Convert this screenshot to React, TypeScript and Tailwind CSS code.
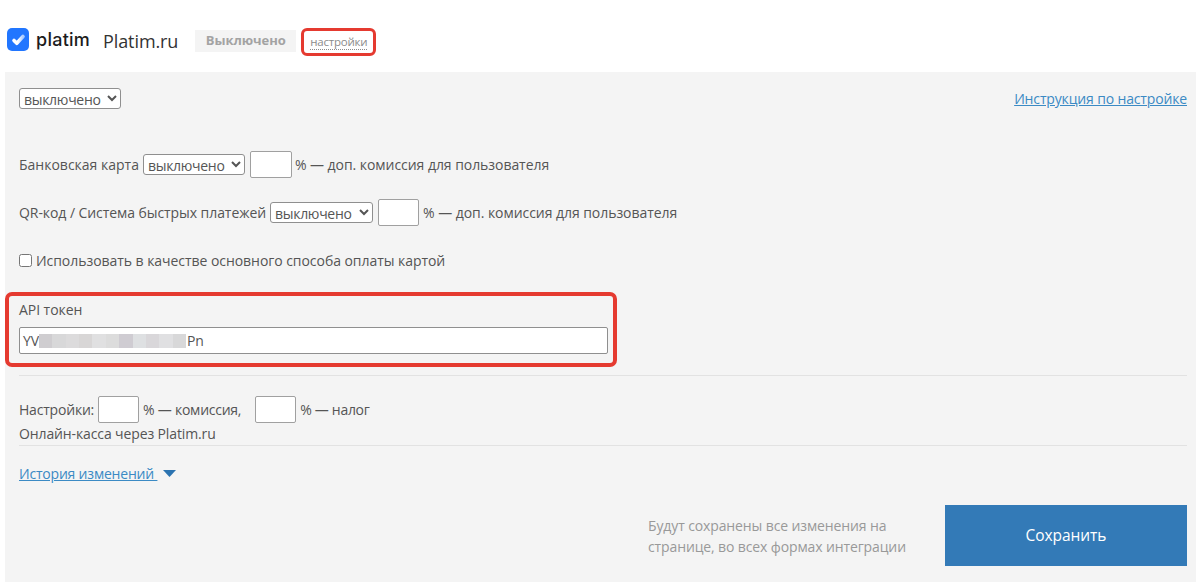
const blur = ["#cfcdd0", "#d8d8d9", "#dcdbdc", "#d8d6d6", "#e0e0e1", "#dcdcdc", "#cfccd2", "#dee0e2", "#d9d7da", "#e0e0e2", "#d8d8d9"];

export default function App() {
  const sel = "h-[21px] w-[102px] appearance-auto rounded-[3px] border border-[#8f8f8f] bg-white pl-0 text-[14px] leading-none tracking-[-0.3px] text-[#555]";
  const num = "h-[27px] rounded-[2px] border border-[#a0a0a0] bg-white";
  return (
    <div className="flex h-[582px] w-[1196px] flex-col overflow-hidden bg-white font-['Open_Sans','Liberation_Sans',sans-serif] text-[14px] tracking-[-0.05px] text-[#555]">
      <header className="flex h-[72px] shrink-0 items-center pl-[7px] pt-[7px]">
        <svg width="22" height="23" viewBox="0 0 22 23" className="shrink-0">
          <defs>
            <linearGradient id="chk" x1="0" y1="0" x2="1" y2="0">
              <stop offset="0.45" stopColor="#fff" />
              <stop offset="1" stopColor="#a9cbff" />
            </linearGradient>
          </defs>
          <rect width="22" height="23" rx="5" fill="#2176ff" />
          <path d="M7 12.5l2.8 2.8L16 8.5" fill="none" stroke="url(#chk)" strokeWidth="3.6" strokeLinecap="round" strokeLinejoin="round" />
        </svg>
        <span className="-mt-[1px] ml-[7px] font-['Inter',sans-serif] text-[18px] font-medium tracking-[0.25px] text-[#1c1c1c]">platim</span>
        <span className="ml-[13px] mt-[2px] text-[18px] leading-none tracking-[-0.1px] text-[#333]">Platim.ru</span>
        <span className="ml-[17px] mt-[2px] flex h-[22px] w-[101px] items-center justify-center bg-[#f4f4f4] text-[13px] font-bold text-[#a3a3a3]">Выключено</span>
        <span className="ml-[5px] mt-[5px] flex h-[28px] w-[75px] items-center justify-center rounded-[6px] border-[3px] border-[#e53a30]">
          <span className="border-b border-dotted border-[#8c8c8c] text-[11.5px] leading-[14px] tracking-[-0.2px] text-[#8c8c8c]">настройки</span>
        </span>
      </header>
      <main className="ml-[5px] flex min-h-0 flex-1 flex-col bg-[#f4f4f4] pl-[14px]">
        <div className="flex items-center justify-between pr-[9px] pt-[16px]">
          <select className={sel}><option>выключено</option></select>
          <a className="text-[14px] tracking-[-0.15px] text-[#3b8ac4] underline">Инструкция по настройке</a>
        </div>
        <div className="mt-[42px] flex h-[27px] items-center gap-[4px]">
          <span className="tracking-[0px]">Банковская карта</span>
          <select className={sel}><option>выключено</option></select>
          <input className={`${num} -mr-[1px] ml-[1px] w-[42px]`} />
          <span>% — доп. комиссия для пользователя</span>
        </div>
        <div className="mt-[21px] flex h-[27px] items-center gap-[4px]">
          <span className="tracking-[-0.07px]">QR-код / Система быстрых платежей</span>
          <select className="h-[21px] w-[103px] appearance-auto rounded-[3px] border border-[#8f8f8f] bg-white pl-0 text-[14px] leading-none tracking-[-0.3px] text-[#555]"><option>выключено</option></select>
          <input className={`${num} ml-[1px] w-[41px]`} />
          <span>% — доп. комиссия для пользователя</span>
        </div>
        <label className="mt-[21px] flex h-[27px] items-center gap-[4px]">
          <input type="checkbox" className="h-[13px] w-[13px]" />
          <span>Использовать в качестве основного способа оплаты картой</span>
        </label>
        <div className="-ml-[14px] mt-[18px] h-[75px] w-[612px] rounded-[7px] border-[4px] border-[#e53a30] pl-[10px] pr-[5px] pt-[4px]">
          <div className="leading-[20px]">API токен</div>
          <div className="mt-[7px] flex h-[27px] items-center rounded-[2px] border border-[#8f8f8f] bg-white pl-[3px] text-[#555]">
            <span className="w-[16px]">YV</span>
            <span className="flex h-[14px] w-[147px]">
              {blur.map((c, i) => (
                <span key={i} className="h-full flex-1" style={{ backgroundColor: c }} />
              ))}
            </span>
            <span className="ml-[1px]">Pn</span>
          </div>
        </div>
        <div className="mr-[9px] mt-[8px] border-t border-[#e2e2e2]" />
        <div className="mt-[20px] flex h-[27px] items-center">
          <span className="tracking-[-0.2px]">Настройки:</span>
          <input className={`${num} ml-[4px] w-[41px]`} />
          <span className="ml-[4px] tracking-[-0.25px]">% — комиссия,</span>
          <input className={`${num} ml-[14px] w-[41px]`} />
          <span className="ml-[4px] tracking-[-0.3px]">% — налог</span>
        </div>
        <div className="mt-[1px] leading-[20px] tracking-[-0.12px]">Онлайн-касса через Platim.ru</div>
        <div className="mr-[9px] mt-[1px] border-t border-[#e2e2e2]" />
        <div className="mt-[17px] flex items-center gap-[6px]">
          <a className="tracking-[-0.2px] text-[#3b8ac4] underline">История изменений&nbsp;</a>
          <svg width="13" height="7" viewBox="0 0 13 7"><path d="M0 0h13L6.5 7z" fill="#2b73b0" /></svg>
        </div>
        <div className="mt-[21px] flex items-start justify-end pr-[9px]">
          <p className="mr-[33px] mt-[10px] w-[264px] text-[14px] leading-[21px] tracking-[-0.12px] text-[#999]">Будут сохранены все изменения на странице, во всех формах интеграции</p>
          <button className="h-[61px] w-[242px] bg-[#337ab7] text-[15.5px] text-white">Сохранить</button>
        </div>
      </main>
    </div>
  );
}
